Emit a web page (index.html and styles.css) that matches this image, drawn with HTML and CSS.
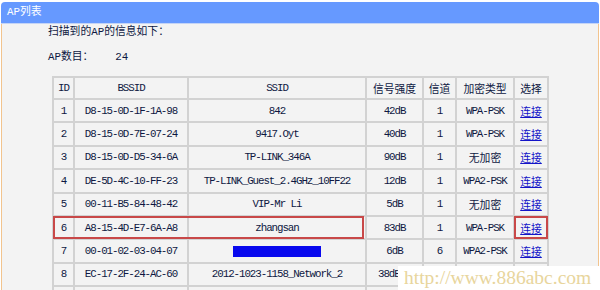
FILE: index.html
```html
<!DOCTYPE html>
<html lang="zh-CN">
<head>
<meta charset="utf-8">
<title>AP列表</title>
<link rel="stylesheet" href="styles.css">
</head>
<body>
<div class="panel">
  <div class="panel-title">AP列表</div>
  <div class="panel-body">
    <p class="line">扫描到的AP的信息如下：</p>
    <p class="line count"><span>AP数目：</span><span class="num">24</span></p>
    <table class="ap-table">
      <colgroup>
        <col class="c-id"><col class="c-bssid"><col class="c-ssid"><col class="c-sig"><col class="c-ch"><col class="c-enc"><col class="c-sel">
      </colgroup>
      <thead>
        <tr><th>ID</th><th>BSSID</th><th>SSID</th><th class="cn">信号强度</th><th class="cn">信道</th><th class="cn">加密类型</th><th class="cn">选择</th></tr>
      </thead>
      <tbody>
        <tr><td>1</td><td>D8-15-0D-1F-1A-98</td><td>842</td><td>42dB</td><td>1</td><td>WPA-PSK</td><td class="cn"><a href="#">连接</a></td></tr>
        <tr><td>2</td><td>D8-15-0D-7E-07-24</td><td>9417.Oyt</td><td>40dB</td><td>1</td><td>WPA-PSK</td><td class="cn"><a href="#">连接</a></td></tr>
        <tr><td>3</td><td>D8-15-0D-D5-34-6A</td><td>TP-LINK_346A</td><td>90dB</td><td>1</td><td class="cn">无加密</td><td class="cn"><a href="#">连接</a></td></tr>
        <tr><td>4</td><td>DE-5D-4C-10-FF-23</td><td>TP-LINK_Guest_2.4GHz_10FF22</td><td>12dB</td><td>1</td><td>WPA2-PSK</td><td class="cn"><a href="#">连接</a></td></tr>
        <tr><td>5</td><td>00-11-B5-84-48-42</td><td>VIP-Mr Li</td><td>5dB</td><td>1</td><td class="cn">无加密</td><td class="cn"><a href="#">连接</a></td></tr>
        <tr><td class="mark mark-first">6</td><td class="mark">A8-15-4D-E7-6A-A8</td><td class="mark mark-last">zhangsan</td><td>83dB</td><td>1</td><td>WPA-PSK</td><td class="cn mark mark-box"><a href="#">连接</a></td></tr>
        <tr><td>7</td><td>00-01-02-03-04-07</td><td><span class="hidden-ssid"></span></td><td>6dB</td><td>6</td><td>WPA2-PSK</td><td class="cn"><a href="#">连接</a></td></tr>
        <tr><td>8</td><td>EC-17-2F-24-AC-60</td><td>2012-1023-1158_Network_2</td><td class="clip"><span>38dB</span></td><td></td><td></td><td></td></tr>
        <tr><td></td><td></td><td></td><td></td><td></td><td></td><td></td></tr>
      </tbody>
    </table>
  </div>
  <div class="watermark">http://www.886abc.com</div>
</div>
</body>
</html>
```
FILE: styles.css
```css
html, body {
  margin: 0;
  padding: 0;
  background: #ffffff;
  overflow: hidden;
  height: 290px;
}

body {
  font-family: "Liberation Mono", "Noto Sans CJK SC", monospace;
  font-size: 10.8px;
  color: #0e1842;
}

.panel {
  position: relative;
  margin: 2px 1px 0 1px;
  height: 288px;
}

.panel-title {
  height: 21px;
  line-height: 21px;
  background: #6699ff;
  color: #ffffff;
  padding-left: 6px;
  border-radius: 4px 4px 0 0;
  border-bottom: 1px solid #c4d4f6;
}

.panel-body {
  background: #f3f3f3;
  border-left: 1px solid #f2c48e;
  border-right: 1px solid #f2c48e;
  padding: 0 0 0 46px;
  height: 266px;
}

.line {
  margin: 0;
  line-height: 14px;
}

.line:first-child {
  padding-top: 1px;
}

.count {
  margin-top: 11px;
}

.count .num {
  margin-left: 22px;
}

.ap-table {
  margin: 12px 0 0 4px;
  border-collapse: collapse;
  table-layout: fixed;
  width: 495px;
  letter-spacing: -1.05px;
}

.c-id { width: 21px; }
.c-bssid { width: 114px; }
.c-ssid { width: 178px; }
.c-sig { width: 57px; }
.c-ch { width: 33px; }
.c-enc { width: 58px; }
.c-sel { width: 34px; }

.ap-table th,
.ap-table td {
  border: 2px solid #d2d2d2;
  padding: 0;
  text-align: center;
  font-weight: normal;
  white-space: nowrap;
  overflow: visible;
}

.ap-table th {
  height: 20px;
}

.ap-table td {
  height: 21.4px;
}

.ap-table .cn {
  letter-spacing: 0;
}

.ap-table a {
  color: #1414c8;
  text-decoration: underline;
}

.ap-table td.mark {
  position: relative;
}

.ap-table td.mark::after {
  content: "";
  position: absolute;
  top: -1px;
  bottom: -1px;
  left: -1px;
  right: -1px;
  border-top: 2px solid #c84848;
  border-bottom: 2px solid #c84848;
  pointer-events: none;
}

.ap-table td.mark-first::after {
  border-left: 2px solid #c84848;
}

.ap-table td.mark-last::after {
  right: 1px;
  border-right: 2px solid #c84848;
}

.ap-table td.mark-box::after {
  border-left: 2px solid #c84848;
  border-right: 2px solid #c84848;
}

.ap-table td.clip {
  text-align: left;
  padding-left: 11px;
}

.hidden-ssid {
  display: inline-block;
  width: 88px;
  height: 11px;
  background: #0808ee;
  vertical-align: middle;
}

.watermark {
  position: absolute;
  right: -1px;
  bottom: 0;
  width: 196px;
  height: 24px;
  padding-left: 6px;
  background: #ffffff;
  font-family: "Liberation Serif", serif;
  font-size: 19.5px;
  line-height: 24px;
  color: #e8d59c;
  letter-spacing: 0;
}
```
